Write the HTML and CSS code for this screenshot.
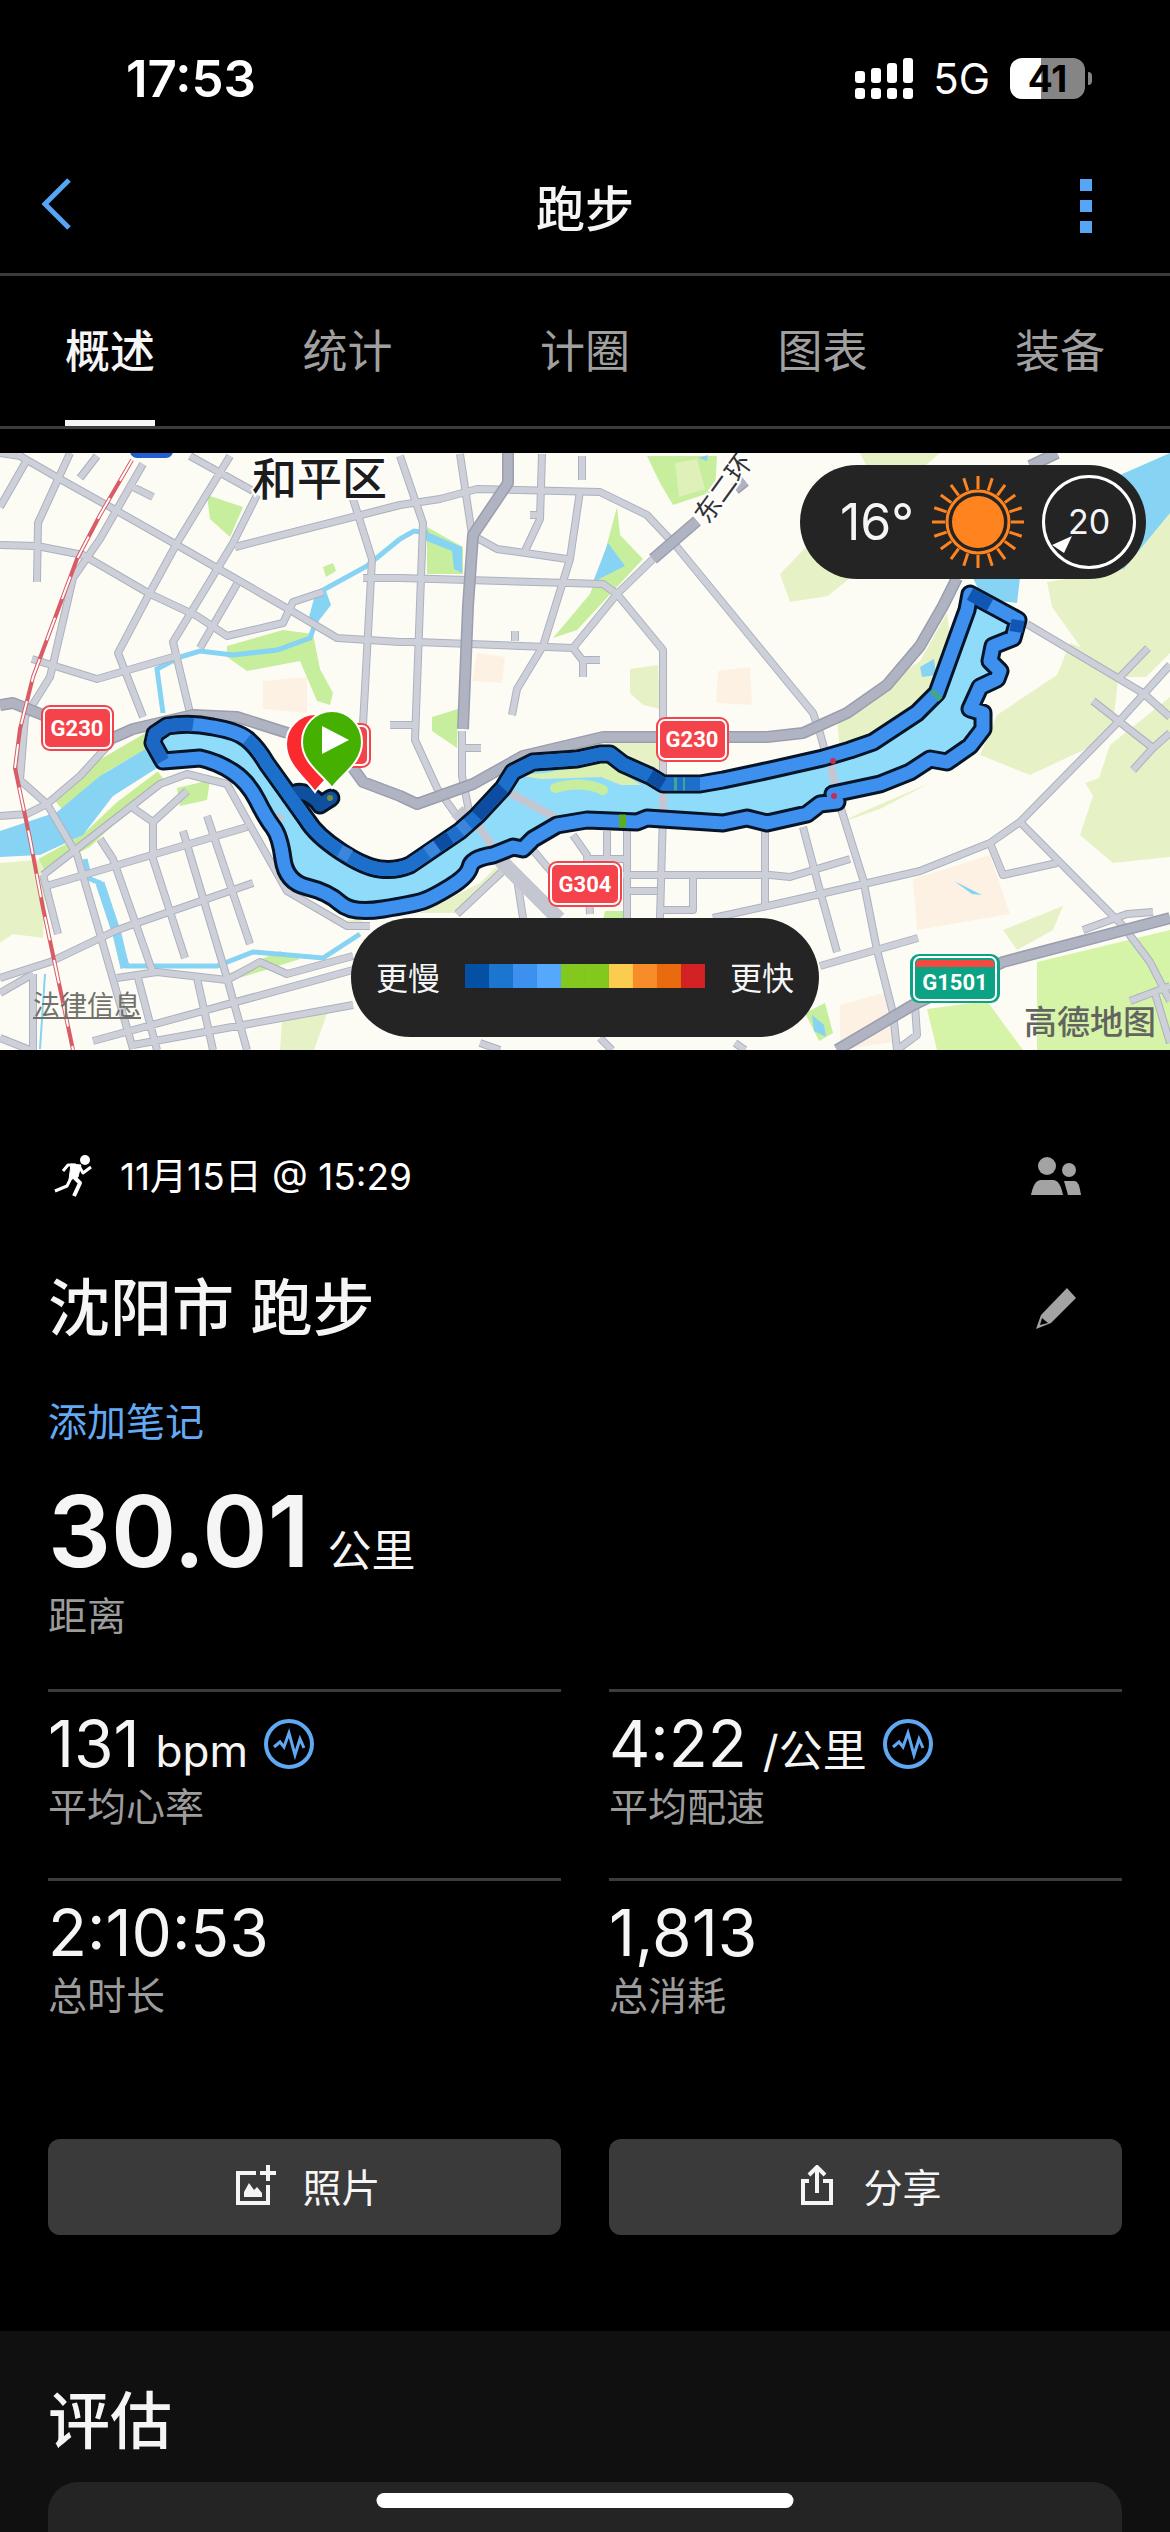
FILE: index.html
```html
<!DOCTYPE html>
<html lang="zh-CN">
<head>
    <meta charset="UTF-8">
    <meta name="viewport" content="width=device-width, initial-scale=1.0">
    <title>跑步</title>
    <link rel="stylesheet" href="styles.css">
</head>
<body>
    <div class="status-bar">
        <span class="time">17:53</span>
        <div class="status-right">
            <svg class="signal" viewBox="0 0 58 41">
                <rect x="0" y="13" width="10" height="12" rx="3"/>
                <rect x="16" y="10" width="10" height="15" rx="3"/>
                <rect x="32" y="5" width="10" height="20" rx="3"/>
                <rect x="48" y="0" width="10" height="25" rx="3"/>
                <rect x="0" y="30" width="10" height="11" rx="3"/>
                <rect x="16" y="30" width="10" height="11" rx="3"/>
                <rect x="32" y="30" width="10" height="11" rx="3"/>
                <rect x="48" y="30" width="10" height="11" rx="3"/>
            </svg>
            <span class="network">5G</span>
            <span class="battery">41</span>
        </div>
    </div>

    <header class="nav-bar">
        <button type="button" class="nav-btn" aria-label="返回">
            <svg width="32" height="52" viewBox="0 0 32 52"><path d="M29 2 5 26l24 24" fill="none" stroke="#57a6f5" stroke-width="5"/></svg>
        </button>
        <h1>跑步</h1>
        <button type="button" class="nav-btn nav-more" aria-label="更多">
            <svg width="12" height="54" viewBox="0 0 12 54" fill="#57a6f5"><path d="M0 0h12v12H0zM0 21h12v12H0zM0 42h12v12H0z"/></svg>
        </button>
    </header>

    <nav class="tabs">
        <a href="#" class="active">概述</a>
        <a href="#">统计</a>
        <a href="#">计圈</a>
        <a href="#">图表</a>
        <a href="#">装备</a>
    </nav>

    <section class="map">
        <svg class="map-canvas" viewBox="0 0 1170 597">
            <rect width="1170" height="597" fill="#fdfcf4"/>

            <!-- 街区 -->
            <g fill="#fdf1e4">
                <path d="M263 228l44-4v36l-44-4zM913 426l77-24 20 59-93 16zM477 200l28 4-3 26-30-2zM718 218l32-4 2 38-36-2zM840 552l50-14 10 50-60 9z"/>
            </g>

            <!-- 绿地 -->
            <g fill="#e6f2c6">
                <path d="M0 410l47-4-4 79-30-4-13 9zM630 216l28-4 2 44-17-4-13-12zM837 264l83-56 27-48 5 42-50 78-62 20z"/>
                <path d="M1047 129l66-10 30-50 27-11v142l-24 24-44 0-50-70zM780 121l30-31 40 35-22 18-38 6zM1070 190l50 20-7 62-23 22-60 28-50-20 17-40 60-40z"/>
                <path d="M1170 244v160l-57 6-33-28 30-90zM1003 477l60-24-10 24-36 20zM860 0h80l-14 12h-60zM282 568l46-10-14 39h-34zM1000 300l50-10-10 24zM1085 330l40-14 12 26-34 16zM330 470l30-4 10 10zM560 292l100-4 4 40-40-10z"/>
                <path d="M860 360l70-30-50 26-40 14zM480 430l20-20 10 8-50 42h-40z"/>
            </g>
            <g fill="#c6ee9c">
                <path d="M207 42l36 12-13 30-20-18zM227 193l56-16 30 4 7 35 13 24-3 12-13-4-17-40-53 10-20-14zM177 335l33-8-3 20-27 6z"/>
                <path d="M427 74l36 20v27h-36zM647 3h70l-2 35-42 14-13-22zM617 54l3 28 23 24-66 71-24 8 37-44 13-35zM432 264l26-8-1 39-25-17z"/>
                <path d="M323 114l10-4 3 8-10 6zM605 458h20v10h-22zM805 560l20-10 8 30-14 8zM230 520l50-22 20 8-70 22z"/>
            </g>
            <path d="M1037 509l133-32v120h-133zM927 556l60-8 36 49h-86z" fill="#d6f4a8"/>
            <path d="M675 10l22-4 8 30-26 8z" fill="#dff1b8"/>
            <path d="M57 350l44-36 48-28M42 412l44-24 36-34 40-30" fill="none" stroke="#c9ec98" stroke-width="14"/>

            <!-- 水系 -->
            <g fill="#86d3f3">
                <path d="M0 378l57-19 43-36 47-28 10 20-44 28-30 39-43 20-40 2zM608 90l17 23-32 16zM1120 22l50-22v60l-47 57zM973 125h47l-3 25-34-4z"/>
                <path d="M316 138l10 0 5 14-14 18-8-6zM920 214l14-8 2 16-14 2zM954 428l28 14-10-1zM812 562l12 10 2 12-12-6zM420 76l42 18v26l-8-4-2-18-30-12zM698 5l10-3-1 6z"/>
            </g>
            <g fill="none" stroke="#86d3f3" stroke-width="5">
                <path d="M400 86l-33 27-44 24-3 20-10 28-33 12-44 5-33-4-20 6-23 12 6 44M400 86l14-8 14 2"/>
                <path d="M45 521l-5 75" stroke-width="2"/>
                <path d="M85 406l5 20 10 4 17 51 10 32h90l36-14 70 6 37-24"/>
                <path d="M100 430l17 51 8 34" stroke-width="9"/>
            </g>

            <!-- 道路: 先画深色描边再画路面 -->
            <defs>
                <g id="roads">
                    <path d="M28 5L0 54M20 3l47 27 43 24 67 38 40 23 73 42 47 28 63 4h17l156 6 44-54 36-35M0 92l37 1 46 9 67 39 47 22 30 20 56-13 10-21 30-10"/>
                    <path d="M70 0L38 70l-1 59M97 3L80 25M143 11l-43 75-27 39-23 99-25 40-5 63 27 24M230 3l-53 87-30 55-29 55 25 64M257 42l-24 48-26 43-34 56 17 71M237 131l-37 64M32 206l65 20 83-24M190 3l63 35M133 34l20 10M0 0l20 3"/>
                    <path d="M235 94l165-42 40-6 37-10 123 3 47 23 30 32 113 138 23 28 7 20 17 63 26 83 14 71 16 63"/>
                    <path d="M353 46l19 60-9 166M400 3l23 67-8 217 22 48 20 28M363 125h37l203 6 14 10 46 56v162l-3 106M573 195l10 13v16M583 207h17M582 3v24M580 38l-10 68-27 87-26 43-5 26M542 1l-2 65-15 32M460 1l12 81 25 14 70 10M530 62h12M515 178v10M390 272h26M463 295h18"/>
                    <path d="M0 363l27-2 20-10 33-28 33-36M47 351l30 51 23 79 33 115M43 422l117-91 27-10 40 10 20 36 40 71 60 35h23M43 422l15 59M43 434l204-60M253 430l-136 47-67 32-50 16"/>
                    <path d="M100 386l13 20 40 114M133 355l20 14 34-31M153 369v37l32 99M183 378l44 147 20 72M207 363l43 128M117 525l40-6 70 8 33-18 27 12 66-18M93 588l260-71M133 592l220-40M33 521v76M137 521l20 76M197 525l16 72M0 540l33-19M0 585l30 12"/>
                    <path d="M462 278v45l8 40M507 414l-50 47M517 426l6 39M573 382l14 20 3 59M607 378v28M627 378v87M623 422h147l20 2 60-18M590 406h37M630 438h27M693 422v35h-30M765 378v75M713 465l77-17 130-30 70-28 30-21 103-105 47-52"/>
                    <path d="M803 374l17 64 17 61M820 513l98-28M1027 171l116 69 27 24M1120 224l28-29M1093 248l60 47-20 22M1153 295l17-15M1020 369l103 104 27 36 20 39M990 390l13 32 54-12M1083 477l44-16 26-2M1130 548l40-15M1155 540l15 50M893 560l4 37M915 552l2 30-20 15M532 396l22 26M480 590l20 7M600 585l12 12M735 590l10 7"/>
                </g>
                <g id="highways">
                    <path d="M0 252l13-2 30 12 47 25 25-3 18-8 60-14 44 2 63 20 50 27 13 18 37 14 17 8 56-20 50-28 80-19h164l36-4 44-20 40-28 33-39 23-40 14-28"/>
                    <path d="M508 0v30l-35 52-5 71-5 123M653 106l44-38M735 36l10-8M1030 13l27-13M837 597l76-45 90-43 167-44"/>
                </g>
                <path id="route" d="M290 343L267 311Q257 294 247 286T213 274Q190 269 167 273L155 281L153 290L163 308L200 305Q218 309 233 319T257 347T273 374T283 406T307 434T340 450T383 456T423 448T450 434T470 414T493 402L513 394L523 396L533 386L557 372L587 367L637 369L647 365L723 370L747 365L767 370L807 361L820 351L837 349L833 341L880 331L910 319L930 306L947 309L970 293L983 276L983 260L970 256L980 234L997 226L1000 218L990 208L993 193L1013 185L1018 167L970 141L967 157L950 204L937 240L917 260L873 289L850 297L823 305L770 317L723 327L700 331L663 331L650 323L623 311L610 301L600 301L577 306L533 309L513 319L503 335L477 363L460 378L410 412Q396 418 380 416T340 398T307 367Z"/>
                <path id="route-start" d="M290 343Q298 337 307 341T320 352L331 345"/>
            </defs>
            <g fill="none" stroke-linejoin="round">
                <use href="#roads" stroke="#adb1c0" stroke-width="8"/>
                <use href="#roads" stroke="#cdd0d9" stroke-width="6"/>
                <path d="M457 358l50 56 52 52" stroke="#c4c7d1" stroke-width="15"/>
                <use href="#highways" stroke="#9a9eae" stroke-width="12"/>
                <use href="#highways" stroke="#b0b3c2" stroke-width="9"/>
                <path d="M132 7l-32 55-23 44-25 67-19 51-13 52-5 39 15 71 12 64 15 71 16 76" stroke="#d95b66" stroke-width="4"/>
                <path d="M132 7l-32 55-23 44-25 67-19 51-13 52-5 39 15 71 12 64 15 71 16 76" stroke="#fff" stroke-width="2" stroke-dasharray="24 20"/>
            </g>
            <rect x="130" y="-10" width="43" height="15" rx="7" fill="#1f5fd0"/>

            <!-- 跑步轨迹 -->
            <g stroke-linejoin="round" stroke-linecap="round">
                <use href="#route" fill="#8fdcfa" stroke="none"/>
                <path d="M515 322l30-2 60-12 36 24-20 0-20-8-60 2z" fill="#d9f0b0"/>
                <path d="M545 328l50 0 40 14-60 4z" fill="#8fdcfa"/>
                <path d="M555 335q28-8 48 2" fill="none" stroke="#c6ee9c" stroke-width="10"/>
                <path d="M512 341l44 24M478 372l16 24M663 336v30M272 370l8-5M830 308l6 30" fill="none" stroke="#c4c7d1" stroke-width="8"/>
                <use href="#route" fill="none" stroke="#061427" stroke-width="19"/>
                <use href="#route-start" fill="none" stroke="#061427" stroke-width="19"/>
                <use href="#route" fill="none" stroke="#3e90ee" stroke-width="13"/>
                <use href="#route-start" fill="none" stroke="#0e4f9e" stroke-width="13"/>
            </g>
            <g fill="none" stroke-width="13" stroke-linejoin="round">
                <path d="M700 331h-37l-13-8-27-12-13-10h-10l-23 5-44 3-20 10-10 16-26 28-17 15-50 34Q396 418 380 416T340 398T307 367L267 311Q257 294 247 286" stroke="#1c70cc"/>
                <path d="M503 335l-26 28M450 385l-14 9M663 331l-13-8" stroke="#0c4da2"/>
                <path d="M460 378l8-7M427 400l10-7M350 403l-10-5" stroke="#3b86dc"/>
                <path d="M163 308L153 290L155 281L167 273Q180 270 193 272" stroke="#1c66c4"/>
                <path d="M970 141l20 11M1018 167l-2 12" stroke="#0f57b2"/>
                <path d="M619 368h7" stroke="#5cae1e"/>
                <path d="M674 331h3M683 331h2M934 244l4-4" stroke="#3fa88a"/>
            </g>
            <circle cx="833" cy="308" r="3" fill="#c0305a"/>
            <circle cx="834" cy="343" r="3" fill="#c0305a"/>
            <circle cx="330" cy="345" r="3" fill="#7a8a3a"/>

            <!-- 公路编号 -->
            <g class="shield">
                <rect x="298" y="270" width="73" height="45" rx="9"/>
                <rect x="301" y="273" width="67" height="39" rx="6"/>
                <rect x="41" y="252" width="73" height="46" rx="9"/>
                <rect x="44" y="255" width="67" height="40" rx="6"/>
                <text x="77" y="283">G230</text>
                <rect x="656" y="264" width="73" height="45" rx="9"/>
                <rect x="659" y="267" width="67" height="39" rx="6"/>
                <text x="692" y="294">G230</text>
                <rect x="548" y="408" width="74" height="46" rx="9"/>
                <rect x="551" y="411" width="68" height="40" rx="6"/>
                <text x="585" y="439">G304</text>
            </g>
            <g class="shield shield-green">
                <rect x="910" y="501" width="90" height="49" rx="9"/>
                <rect x="914" y="504" width="82" height="43" rx="6"/>
                <path d="M916 514v-3q0-4 4-4h70q4 0 4 4v3z" fill="#f5483f"/>
                <text x="955" y="537">G1501</text>
            </g>

            <!-- 起点终点 -->
            <g stroke="#fff" stroke-width="2">
                <path d="M315 339c-10-14-29-27-29-48a30 30 0 0 1 60 0c0 21-21 34-31 48z" fill="#fa2a2e"/>
                <path d="M332 335c-10-14-30-25-30-46a30 31 0 0 1 60 0c0 21-20 32-30 46z" fill="#46b000"/>
            </g>
            <path d="M322 273l27 14-27 14z" fill="#fff"/>

            <text class="district" x="252" y="43">和平区</text>
            <text class="road-name" transform="translate(708 72) rotate(-54)">东二环</text>
        </svg>

        <div class="weather">
            <span class="temp">16°</span>
            <svg width="92" height="92" viewBox="-46 -46 92 92">
                <circle r="26" fill="#ff8420"/>
                <circle r="31" fill="none" stroke="#ff8420" stroke-width="3"/>
                <g stroke="#ff8420" stroke-width="3">
                    <path id="ray4" d="M0-33V-46M0 33V46M-33 0H-46M33 0H46"/>
                    <use href="#ray4" transform="rotate(18)"/>
                    <use href="#ray4" transform="rotate(36)"/>
                    <use href="#ray4" transform="rotate(54)"/>
                    <use href="#ray4" transform="rotate(72)"/>
                </g>
            </svg>
            <div class="wind">
                20
                <svg viewBox="0 0 94 94"><path d="M10 70l20-9-8 17z" fill="#fff"/></svg>
            </div>
        </div>

        <div class="legend">
            <span>更慢</span>
            <div class="scale">
                <i class="c1"></i><i class="c2"></i><i class="c3"></i><i class="c4"></i><i class="c5"></i>
                <i class="c5"></i><i class="c6"></i><i class="c7"></i><i class="c8"></i><i class="c9"></i>
            </div>
            <span>更快</span>
        </div>

        <a href="#" class="legal">法律信息</a>
        <span class="map-brand">高德地图</span>
    </section>

    <main class="summary">
        <div class="row date-row">
            <svg class="runner" viewBox="0 0 40 42" fill="none" stroke="#fff" stroke-linejoin="round">
                <circle cx="31" cy="5" r="5" fill="#fff" stroke="none"/>
                <path d="M9 16l5-6 8 0" stroke-width="3"/>
                <path d="M25 11l4 7 8-6" stroke-width="3"/>
                <path d="M17 9l10 1-3 12-9 3z" fill="#fff" stroke-width="1"/>
                <path d="M19 21l7 7-6 13" stroke-width="4"/>
                <path d="M17 23l-4 8-12 5" stroke-width="3"/>
            </svg>
            <span class="date">11月15日 @ 15:29</span>
            <button type="button" class="icon-btn" aria-label="隐私">
                <svg width="52" height="40" viewBox="0 0 52 40" fill="#a3a3a3">
                    <circle cx="17" cy="10" r="9"/>
                    <circle cx="39" cy="14" r="7"/>
                    <path d="M1 39q3-15 10-15h12q7 0 10 15zM34 25h11q4 0 6 14H38z"/>
                </svg>
            </button>
        </div>

        <div class="row title-row">
            <h2>沈阳市 跑步</h2>
            <button type="button" class="icon-btn" aria-label="编辑">
                <svg width="40" height="42" viewBox="0 0 40 42"><path fill="#a3a3a3" fill-rule="evenodd" d="M31 0l9 10-25 25-15 6 5-14zM6 30l-2 7 8-2z"/></svg>
            </button>
        </div>

        <a href="#" class="add-note">添加笔记</a>

        <div class="distance">
            <span class="big">30.01</span>
            <span class="unit">公里</span>
        </div>
        <div class="label">距离</div>

        <div class="metrics">
            <div class="metric">
                <div class="value">131 <span class="unit">bpm</span>
                    <svg class="pulse" viewBox="0 0 50 50"><circle cx="25" cy="25" r="23"/><path d="M10 28l6-5 4 5 5-14 6 22 5-16 4 9"/></svg>
                </div>
                <div class="label">平均心率</div>
            </div>
            <div class="metric">
                <div class="value">4:22 <span class="unit">/公里</span>
                    <svg class="pulse" viewBox="0 0 50 50"><circle cx="25" cy="25" r="23"/><path d="M10 28l6-5 4 5 5-14 6 22 5-16 4 9"/></svg>
                </div>
                <div class="label">平均配速</div>
            </div>
            <div class="metric">
                <div class="value">2:10:53</div>
                <div class="label">总时长</div>
            </div>
            <div class="metric">
                <div class="value">1,813</div>
                <div class="label">总消耗</div>
            </div>
        </div>

        <div class="actions">
            <button type="button">
                <svg width="40" height="40" viewBox="0 0 40 40" fill="none" stroke="#f5f5f5" stroke-width="4">
                    <path d="M20 8H2v30h30V20M32 0v16M24 8h16"/>
                    <path d="M8 32V27l5-9 5 7 3-3 5 6v4z" fill="#f5f5f5" stroke="none"/>
                </svg>
                照片
            </button>
            <button type="button">
                <svg width="40" height="40" viewBox="0 0 40 40" fill="none" stroke="#f5f5f5" stroke-width="4">
                    <path d="M12 16H6v22h28V16h-8M20 28V3M12 10l8-8 8 8"/>
                </svg>
                分享
            </button>
        </div>
    </main>

    <section class="evaluate">
        <h2>评估</h2>
        <div class="card"></div>
    </section>

    <div class="home-indicator"></div>
</body>
</html>
```

FILE: styles.css
```css
* {
    box-sizing: border-box;
}
body {
    margin: 0;
    min-height: 100vh;
    display: flex;
    flex-direction: column;
    background-color: #000;
    color: #f5f5f5;
    font-family: Inter, "Noto Sans CJK SC", sans-serif;
}
h1, h2 {
    margin: 0;
    font-weight: 500;
}
a {
    text-decoration: none;
}
button {
    border: none;
    background: none;
    padding: 0;
    font-family: inherit;
    color: inherit;
    cursor: pointer;
}
svg {
    display: block;
    flex-shrink: 0;
}

/* 状态栏 */
.status-bar {
    height: 144px;
    padding: 12px 85px 0 126px;
    display: flex;
    align-items: center;
    justify-content: space-between;
    color: #fff;
}
.time {
    font-size: 51px;
    font-weight: 600;
}
.status-right {
    display: flex;
    align-items: center;
    gap: 20px;
}
.signal {
    width: 58px;
    height: 41px;
    fill: #fff;
}
.network {
    font-size: 42px;
}
.battery {
    position: relative;
    width: 75px;
    height: 41px;
    border-radius: 12px;
    background: linear-gradient(to right, #fff 41%, #858585 41%);
    color: #000;
    font-size: 37px;
    font-weight: 700;
    line-height: 41px;
    text-align: center;
}
.battery::after {
    content: "";
    position: absolute;
    right: -7px;
    top: 14px;
    width: 4px;
    height: 13px;
    border-radius: 0 4px 4px 0;
    background-color: #858585;
}

/* 顶部导航 */
.nav-bar {
    height: 132px;
    padding: 0 78px 6px 40px;
    display: flex;
    align-items: center;
    justify-content: space-between;
    border-bottom: 3px solid #3c3c3c;
}
.nav-bar h1 {
    font-size: 49px;
}
.nav-btn {
    width: 72px;
    padding-bottom: 4px;
}
.nav-more {
    width: 34px;
    padding: 0 0 0 22px;
}
.tabs {
    padding: 0 65px;
    display: flex;
    justify-content: space-between;
    border-bottom: 3px solid #3c3c3c;
}
.tabs a {
    height: 150px;
    line-height: 152px;
    font-size: 45px;
    color: #a0a0a0;
}
.tabs .active {
    color: #f5f5f5;
    font-weight: 500;
    box-shadow: inset 0 -6px #f5f5f5;
}

/* 地图 */
.map {
    position: relative;
    margin-top: 24px;
    overflow: hidden;
}
.map-canvas {
    width: 100%;
    height: auto;
}
.shield rect {
    fill: #f4434a;
}
.shield rect:nth-of-type(even) {
    stroke: #fff;
    stroke-width: 2;
}
.shield text {
    fill: #fff;
    font-family: Roboto, sans-serif;
    font-size: 22px;
    font-weight: 700;
    text-anchor: middle;
}
.shield-green rect {
    fill: #0ba383;
}
.district {
    font-size: 45px;
    font-weight: 500;
    fill: #1c1c1c;
    stroke: #fff;
    stroke-width: 4px;
    paint-order: stroke;
}
.road-name {
    font-size: 26px;
    fill: #333;
    stroke: #fff;
    stroke-width: 4px;
    paint-order: stroke;
}
.weather {
    position: absolute;
    top: 12px;
    right: 24px;
    height: 114px;
    padding: 0 10px 0 40px;
    display: flex;
    align-items: center;
    gap: 18px;
    border-radius: 57px;
    background-color: #242424;
}
.temp {
    font-size: 50px;
}
.wind {
    position: relative;
    width: 94px;
    height: 94px;
    border: 3px solid #fff;
    border-radius: 50%;
    font-size: 34px;
    line-height: 88px;
    text-align: center;
}
.wind svg {
    position: absolute;
    inset: -3px;
}
.legend {
    position: absolute;
    left: 50%;
    bottom: 13px;
    transform: translateX(-50%);
    height: 119px;
    padding: 0 25px 4px;
    display: flex;
    align-items: center;
    gap: 25px;
    border-radius: 60px;
    background-color: #242424;
    font-size: 32px;
    white-space: nowrap;
}
.scale {
    display: flex;
}
.scale i {
    width: 24px;
    height: 24px;
}
.c1 { background-color: #0450a4; }
.c2 { background-color: #1c76d0; }
.c3 { background-color: #3c90ee; }
.c4 { background-color: #56a8fc; }
.c5 { background-color: #82c81e; }
.c6 { background-color: #fccc50; }
.c7 { background-color: #f88c2a; }
.c8 { background-color: #ea6a10; }
.c9 { background-color: #d22224; }
.legal {
    position: absolute;
    left: 33px;
    bottom: 27px;
    font-size: 27px;
    color: #70706c;
    text-decoration: underline;
}
.map-brand {
    position: absolute;
    right: 14px;
    bottom: 6px;
    font-size: 33px;
    font-weight: 500;
    color: #62645f;
}

/* 活动概要 */
.summary {
    padding: 90px 48px 96px;
}
.row {
    display: flex;
    align-items: center;
}
.date-row {
    height: 72px;
    padding-left: 6px;
    color: #fff;
}
.runner {
    width: 40px;
    height: 42px;
    margin-right: 26px;
}
.date {
    padding-bottom: 4px;
    font-size: 37px;
}
.title-row {
    height: 90px;
    margin-top: 52px;
}
.title-row h2,
.evaluate h2 {
    font-size: 62px;
    line-height: 94px;
}
.icon-btn {
    width: 132px;
    height: 72px;
    margin-left: auto;
    display: flex;
    align-items: center;
    justify-content: center;
}
.add-note {
    display: block;
    margin-top: 41px;
    font-size: 39px;
    line-height: 54px;
    color: #64a9f4;
}
.distance {
    margin-top: 32px;
    height: 108px;
    display: flex;
    align-items: baseline;
    gap: 18px;
    line-height: 100px;
}
.big {
    font-size: 99px;
    font-weight: 600;
}
.unit {
    font-size: 44px;
}
.label {
    font-size: 39px;
    line-height: 54px;
    color: #9c9c9c;
}
.metrics {
    margin-top: 46px;
    display: grid;
    grid-template-columns: 1fr 1fr;
    column-gap: 48px;
}
.metric {
    padding: 16px 0 44px;
    border-top: 3px solid #3c3c3c;
}
.value {
    height: 72px;
    display: flex;
    align-items: baseline;
    gap: 16px;
    font-size: 64px;
    line-height: 72px;
}
.pulse {
    width: 50px;
    height: 50px;
    align-self: center;
    fill: none;
    stroke: #60a8f2;
    stroke-width: 4;
}
.pulse path {
    stroke-width: 3;
}
.actions {
    margin-top: 72px;
    display: grid;
    grid-template-columns: 1fr 1fr;
    gap: 48px;
}
.actions button {
    height: 96px;
    padding: 0 0 4px 8px;
    display: flex;
    align-items: center;
    justify-content: center;
    gap: 26px;
    border-radius: 12px;
    background-color: #3a3a3a;
    font-size: 39px;
}

/* 评估 */
.evaluate {
    flex: 1;
    padding: 44px 48px 0;
    display: flex;
    flex-direction: column;
    background-color: #101010;
}
.card {
    flex: 1;
    min-height: 50px;
    margin-top: 13px;
    border-radius: 30px 30px 0 0;
    background-color: #242424;
}
.home-indicator {
    position: fixed;
    left: 50%;
    bottom: 24px;
    width: 417px;
    height: 15px;
    transform: translateX(-50%);
    border-radius: 8px;
    background-color: #fff;
}
```
